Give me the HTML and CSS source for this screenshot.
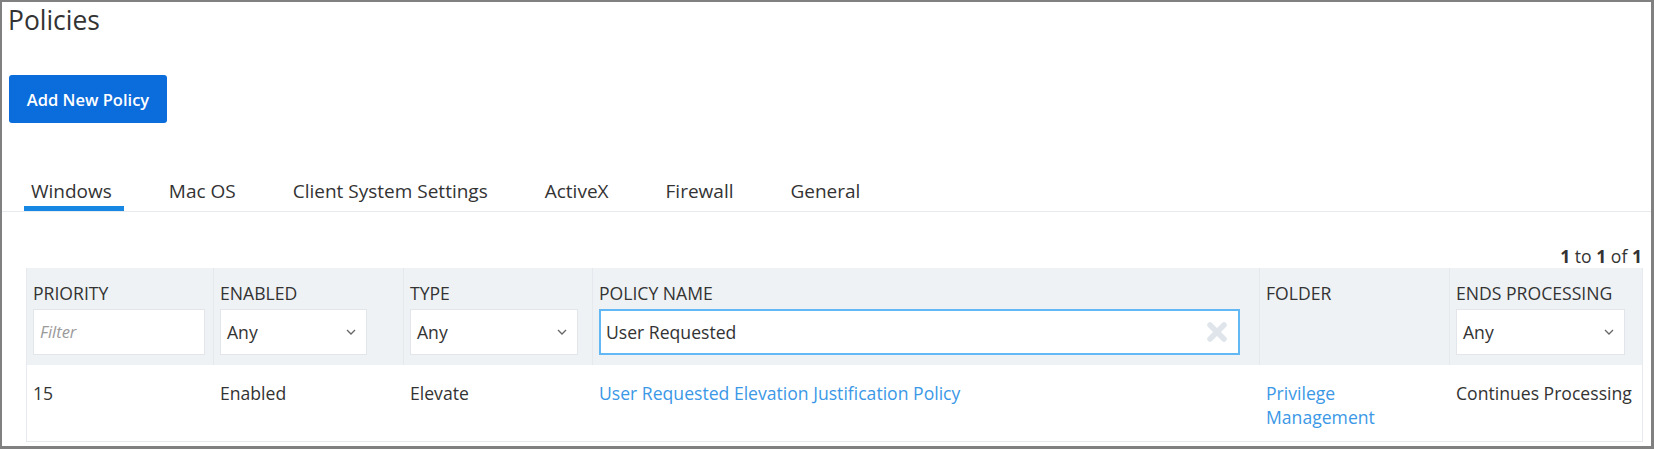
FILE: index.html
```html
<!DOCTYPE html>
<html lang="en">
<head>
<meta charset="utf-8">
<title>Policies</title>
<link rel="stylesheet" href="styles.css">
</head>
<body>
<div class="frame">
  <h1 class="title">Policies</h1>
  <button class="btn-primary" type="button">Add New Policy</button>

  <nav class="tabs">
    <a class="tab tab-active">Windows</a>
    <a class="tab">Mac OS</a>
    <a class="tab">Client System Settings</a>
    <a class="tab">ActiveX</a>
    <a class="tab">Firewall</a>
    <a class="tab">General</a>
  </nav>

  <div class="grid-area">
    <div class="pager"><b>1</b> to <b>1</b> of <b>1</b></div>
    <div class="table">
      <div class="row head">
        <div class="cell">
          <div class="label">PRIORITY</div>
          <div class="field w-priority"><span class="placeholder">Filter</span></div>
        </div>
        <div class="cell">
          <div class="label">ENABLED</div>
          <div class="field w-enabled"><span>Any</span>
            <svg class="chev" width="10" height="6" viewBox="0 0 10 6"><path d="M1 1 L5 5 L9 1" fill="none" stroke="#666" stroke-width="1.3"/></svg>
          </div>
        </div>
        <div class="cell">
          <div class="label">TYPE</div>
          <div class="field w-type"><span>Any</span>
            <svg class="chev" width="10" height="6" viewBox="0 0 10 6"><path d="M1 1 L5 5 L9 1" fill="none" stroke="#666" stroke-width="1.3"/></svg>
          </div>
        </div>
        <div class="cell">
          <div class="label">POLICY NAME</div>
          <div class="field field-focus w-name"><span>User Requested</span>
            <svg class="clear" width="22" height="22" viewBox="0 0 22 22"><path d="M4 4 L18 18 M18 4 L4 18" fill="none" stroke="#dfe5ea" stroke-width="5.5" stroke-linecap="round"/></svg>
          </div>
        </div>
        <div class="cell">
          <div class="label">FOLDER</div>
        </div>
        <div class="cell">
          <div class="label">ENDS PROCESSING</div>
          <div class="field w-ends"><span>Any</span>
            <svg class="chev" width="10" height="6" viewBox="0 0 10 6"><path d="M1 1 L5 5 L9 1" fill="none" stroke="#666" stroke-width="1.3"/></svg>
          </div>
        </div>
      </div>
      <div class="row body">
        <div class="cell">15</div>
        <div class="cell">Enabled</div>
        <div class="cell">Elevate</div>
        <div class="cell"><a class="link">User Requested Elevation Justification Policy</a></div>
        <div class="cell"><a class="link">Privilege<br>Management</a></div>
        <div class="cell">Continues Processing</div>
      </div>
    </div>
  </div>
</div>
</body>
</html>
```

FILE: styles.css
```css
* { box-sizing: border-box; }
html, body { margin: 0; padding: 0; background: #fff; }
body {
  font-family: "Open Sans", "Liberation Sans", sans-serif;
  color: #333;
  font-size: 17.6px;
  line-height: 24px;
}
.frame {
  width: 1654px;
  height: 449px;
  border-style: solid;
  border-color: #808080;
  border-width: 2px 3px 3px 2px;
  overflow: hidden;
}
.title {
  margin: 0;
  padding-left: 6px;
  font-size: 26.4px;
  line-height: 36px;
  font-weight: 400;
  color: #333;
}
.btn-primary {
  display: block;
  margin: 37px 0 0 7px;
  width: 158px;
  height: 48px;
  border: 0;
  border-radius: 3px;
  background: #0b6cdc;
  color: #fff;
  font-family: inherit;
  font-size: 16.5px;
  font-weight: 600;
  padding: 0;
}
.tabs {
  margin-top: 56px;
  display: flex;
  gap: 38px;
  padding-left: 22px;
  border-bottom: 1px solid #e8ebee;
}
.tab {
  font-size: 19px;
  line-height: 24px;
  padding: 0 12px 3px 7px;
  border-bottom: 5px solid transparent;
  color: #333;
}
.tab-active { border-bottom-color: #1688e3; }

.grid-area {
  margin: 32px 8px 0 24px;
}
.pager {
  text-align: right;
  padding-right: 1px;
  line-height: 24px;
}
.pager b { font-weight: 700; }
.table {
  border: 1px solid #e6e9ed;
  border-top: 0;
}
.row {
  display: grid;
  grid-template-columns: 187px 190px 189px 667px 190px 192px;
}
.head {
  background: #eff2f5;
}
.head .cell {
  padding: 13px 6px 10px 6px;
  border-right: 1px solid #e5e9ed;
}
.head .cell:last-child { border-right: 0; }
.label { line-height: 24px; }
.field {
  margin-top: 4px;
  height: 46px;
  background: #fff;
  border: 1px solid #e2e6ea;
  display: flex;
  align-items: center;
  justify-content: space-between;
  padding: 0 10px 0 6px;
}
.field-focus {
  border: 2px solid #62b8f5;
  padding: 0 10px 0 5px;
}
.placeholder {
  color: #9a9a9a;
  font-style: italic;
  font-size: 16.5px;
}
.w-priority { width: 172px; }
.w-enabled { width: 147px; }
.w-type { width: 168px; }
.w-name { width: 641px; }
.w-ends { width: 169px; }
.chev { display: block; }
.clear { display: block; }
.body .cell {
  padding: 16px 6px 12px 6px;
}
.link { color: #3b98e6; text-decoration: none; }
```
